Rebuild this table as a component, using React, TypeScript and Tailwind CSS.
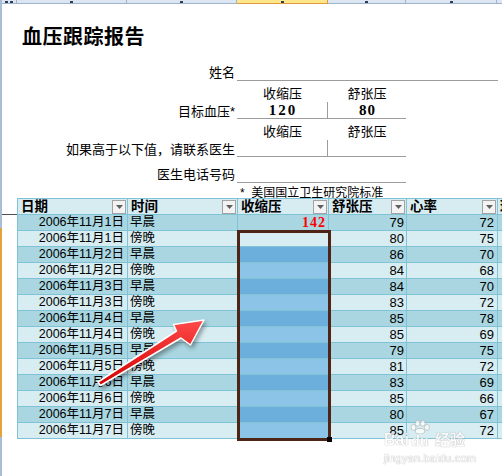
import React from "react";

type Row = [string, string, string, number, number];

const rows: Row[] = [
  ["2006年11月1日", "早晨", "142", 79, 72],
  ["2006年11月1日", "傍晚", "", 80, 75],
  ["2006年11月2日", "早晨", "", 86, 70],
  ["2006年11月2日", "傍晚", "", 84, 68],
  ["2006年11月3日", "早晨", "", 84, 70],
  ["2006年11月3日", "傍晚", "", 83, 72],
  ["2006年11月4日", "早晨", "", 85, 78],
  ["2006年11月4日", "傍晚", "", 85, 69],
  ["2006年11月5日", "早晨", "", 79, 75],
  ["2006年11月5日", "傍晚", "", 81, 72],
  ["2006年11月6日", "早晨", "", 83, 69],
  ["2006年11月6日", "傍晚", "", 85, 66],
  ["2006年11月7日", "早晨", "", 80, 67],
  ["2006年11月7日", "傍晚", "", 85, 72],
];

const rulerCols = [
  { w: "w-[110px]", on: false },
  { w: "w-[110px]", on: false },
  { w: "w-[91px]", on: true },
  { w: "w-[78px]", on: false },
  { w: "w-[91px]", on: false },
];

function Ruler() {
  return (
    <div className="flex h-[4px]">
      <div className="flex w-[15px] shrink-0 items-end justify-center gap-[2px] border-r border-b border-[#9fb3cb] bg-[#dce6f2]">
        <span className="h-[2px] w-[3px] bg-[#2c3e5a]" />
        <span className="h-[2px] w-[3px] bg-[#2c3e5a]" />
      </div>
      {rulerCols.map((c, i) => (
        <div
          key={i}
          className={`flex ${c.w} shrink-0 items-end justify-center border-r ${
            c.on ? "border-b border-[#e39a3b] bg-[#fee68b]" : "border-b border-[#9fb3cb] bg-[#dce6f2]"
          }`}
        >
          <span className="h-[2px] w-[3px] bg-[#2c3e5a]" />
        </div>
      ))}
      <div className="flex-1 border-b border-[#9fb3cb] bg-[#dce6f2]" />
    </div>
  );
}

function Caret() {
  return (
    <span className="flex h-[14px] w-[14px] shrink-0 items-center justify-center border border-[#a3a3a3] bg-[#f3f3f3]">
      <svg width="7" height="4" viewBox="0 0 7 4">
        <path d="M0 0h7L3.5 4z" fill="#5f5f5f" />
      </svg>
    </span>
  );
}

function Form() {
  const line = "border-[#9c9c9c]";
  return (
    <div>
      <div className="h-[60px] pt-[21px] pl-[20px]">
        <h1 className="text-[20px] leading-[24px] font-bold tracking-[0.5px]">血压跟踪报告</h1>
      </div>
      <div className="grid grid-cols-[235px_91px_78px_92px] text-[13px] leading-[16px] whitespace-nowrap">
        <div className="h-[17px] pt-[1px] pr-[2px] text-right">姓名</div>
        <div className={`col-span-3 border-b ${line}`} />

        <div className="h-[20px]" />
        <div className="pt-[5px] text-center">收缩压</div>
        <div className="pt-[5px] text-center">舒张压</div>
        <div />

        <div className="h-[17px] pt-[2px] pr-[2px] text-right">目标血压*</div>
        <div className={`border-r border-b ${line} pl-[2px] text-center font-['Liberation_Serif',serif] text-[15px] leading-[16px] font-bold tracking-[2px]`}>
          120
        </div>
        <div className={`border-b ${line} pl-[1px] text-center font-['Liberation_Serif',serif] text-[15px] leading-[16px] font-bold tracking-[1px]`}>
          80
        </div>
        <div />

        <div className="h-[20px]" />
        <div className="pt-[5px] text-center">收缩压</div>
        <div className="pt-[5px] text-center">舒张压</div>
        <div />

        <div className="h-[17px] pt-[2px] pr-[2px] text-right">如果高于以下值，请联系医生</div>
        <div className={`border-r border-b ${line}`} />
        <div className={`border-b ${line}`} />
        <div />

        <div className="h-[26px] pt-[10px] pr-[2px] text-right">医生电话号码</div>
        <div className={`col-span-2 border-b ${line}`} />
        <div />

        <div className="h-[15px]" />
        <div className="col-span-3 h-[15px] pt-[3px] pl-[3px] text-[12px] leading-[14px]">
          *&nbsp;&nbsp;美国国立卫生研究院标准
        </div>
      </div>
    </div>
  );
}

function Table() {
  const cell = "h-[16px] border-r border-b border-[#80c3d6] leading-[15px]";
  return (
    <div className="flex">
      <div className="w-[15px] shrink-0">
        <div className="h-[17px] border-b border-[#4f4f4f]" />
      </div>
      <div className="relative grid shrink-0 grid-cols-[110px_110px_91px_78px_91px_80px] border-t border-l border-[#80c3d6]">
        {["日期", "时间", "收缩压", "舒张压", "心率"].map((h) => (
          <div key={h} className={`${cell} flex items-center justify-between bg-[#d7ecf1] pr-[1px] pl-[3px] text-[13.5px] font-bold`}>
            <span>{h}</span>
            <Caret />
          </div>
        ))}
        <div className={`${cell} bg-[#d7ecf1] pl-[2px] text-[13.5px] font-bold`}>理由</div>

        {rows.map((r, i) => {
          const bg = i % 2 === 0 ? "bg-[#a9d6e1]" : "bg-[#d8edf2]";
          const sel = i === 0 || i === 1 ? bg : i % 2 === 0 ? "bg-[#6cafdc]" : "bg-[#8cc4e8]";
          return (
            <React.Fragment key={i}>
              <div className={`${cell} ${bg} pr-[3px] text-right text-[12.5px]`}>{r[0]}</div>
              <div className={`${cell} ${bg} pl-[2px] text-[12.5px]`}>{r[1]}</div>
              <div className={`${cell} ${sel} pr-[2px] text-right font-['Liberation_Serif',serif] text-[14px] font-bold tracking-[1px] text-[#ff0000]`}>
                {r[2]}
              </div>
              <div className={`${cell} ${bg} pr-[2px] text-right text-[13px]`}>{r[3]}</div>
              <div className={`${cell} ${bg} pr-[3px] text-right text-[13px]`}>{r[4]}</div>
              <div className={`${cell} ${bg}`} />
            </React.Fragment>
          );
        })}

        <div className="pointer-events-none absolute top-[31px] left-[219px] h-[211px] w-[94px] border-[3px] border-[#4e2416]" />
        <div className="absolute top-[238px] left-[309px] h-[5px] w-[5px] bg-black" />
      </div>
    </div>
  );
}

function Arrow() {
  return (
    <svg
      className="pointer-events-none absolute top-0 left-0 drop-shadow-[2px_3px_2px_rgba(0,0,0,0.35)]"
      width="502"
      height="476"
      viewBox="0 0 502 476"
    >
      <defs>
        <linearGradient id="ar" x1="0" y1="0" x2="0" y2="1">
          <stop offset="0" stopColor="#ff4a4a" />
          <stop offset="1" stopColor="#d40000" />
        </linearGradient>
      </defs>
      <polygon
        points="98,382 176.5,331 173.5,324.5 204,320 190.5,345 181,338 100.5,385.5"
        fill="url(#ar)"
        stroke="#ffffff"
        strokeWidth="1.5"
        strokeLinejoin="round"
      />
    </svg>
  );
}

function Watermark() {
  const glow = "[text-shadow:0_0_1px_#9a9a9a,0_0_1px_#9a9a9a]";
  return (
    <div className="pointer-events-none absolute top-[420px] left-[384px] text-white opacity-75">
      <div className="flex items-end">
        <span className={`text-[16px] leading-[16px] font-bold ${glow}`}>Bai</span>
        <div className="flex flex-col items-center">
          <svg width="22" height="14" viewBox="0 0 22 15">
            <g fill="#ffffff" stroke="#a8a8a8" strokeWidth="0.8">
              <ellipse cx="4" cy="8" rx="2.6" ry="3.2" />
              <ellipse cx="8.5" cy="3.5" rx="2.6" ry="3.2" />
              <ellipse cx="14" cy="3.5" rx="2.6" ry="3.2" />
              <ellipse cx="18.5" cy="8" rx="2.6" ry="3.2" />
              <ellipse cx="11" cy="12" rx="5" ry="3" />
            </g>
          </svg>
          <span className={`text-[14px] leading-[14px] font-bold ${glow}`}>du</span>
        </div>
        <span className={`ml-[4px] text-[15px] leading-[16px] font-bold ${glow}`}>经验</span>
      </div>
      <div className={`mt-[4px] text-[11px] leading-[12px] tracking-[0.2px] ${glow}`}>jingyan.baidu.com</div>
    </div>
  );
}

export default function App() {
  return (
    <div className="relative flex h-[476px] w-[502px] overflow-hidden bg-white font-['Liberation_Sans','Noto_Sans_CJK_SC',sans-serif] text-black">
      <div className="flex w-[2px] shrink-0 flex-col">
        <div className="h-[228px] bg-[#a9bdd6]" />
        <div className="h-[209px] bg-[#e3a23e]" />
        <div className="flex-1 bg-[#a9bdd6]" />
      </div>
      <div className="flex w-[500px] shrink-0 flex-col">
        <Ruler />
        <Form />
        <Table />
      </div>
      <Arrow />
      <Watermark />
    </div>
  );
}
